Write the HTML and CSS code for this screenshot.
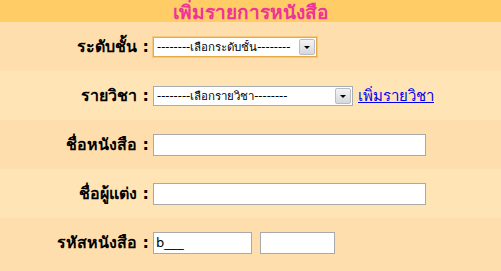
FILE: index.html
```html
<!DOCTYPE html>
<html lang="th">
<head>
  <meta charset="UTF-8" />
  <title>เพิ่มรายการหนังสือ</title>
  <link rel="stylesheet" href="styles.css">
</head>
<body>
  <div class="form-box">
    <div class="form-head">เพิ่มรายการหนังสือ</div>

    <div class="form-row odd">
      <span class="form-label">ระดับชั้น :</span>
      <span class="pick-wrap focus">
        <select class="pick pick-level">
          <option>--------เลือกระดับชั้น--------</option>
        </select>
        <span class="pick-btn"></span>
      </span>
    </div>

    <div class="form-row even">
      <span class="form-label">รายวิชา :</span>
      <span class="pick-wrap">
        <select class="pick pick-subject">
          <option>--------เลือกรายวิชา--------</option>
        </select>
        <span class="pick-btn"></span>
      </span>
      <a href="#" class="add-link">เพิ่มรายวิชา</a>
    </div>

    <div class="form-row odd">
      <span class="form-label">ชื่อหนังสือ :</span>
      <input class="field field-long" type="text" />
    </div>

    <div class="form-row even">
      <span class="form-label">ชื่อผู้แต่ง :</span>
      <input class="field field-long" type="text" />
    </div>

    <div class="form-row odd">
      <span class="form-label">รหัสหนังสือ :</span>
      <input class="field field-code" type="text" value="b___" />
      <input class="field field-num" type="text" />
    </div>
  </div>
</body>
</html>
```

FILE: styles.css
```css
body {
  margin: 0;
  padding: 0;
  font-family: Tahoma, "DejaVu Sans", sans-serif;
  background: #ffdead;
}

.form-box {
  width: 501px;
}

.form-head {
  height: 22px;
  line-height: 24px;
  background: #ffcc66;
  color: #ee3399;
  font-size: 19px;
  font-weight: bold;
  text-align: center;
}

.form-row {
  display: flex;
  align-items: center;
  height: 49px;
}

.form-row.odd {
  background: #ffdead;
}

.form-row.even {
  background: #ffe4b5;
}

.form-label {
  width: 149px;
  text-align: right;
  font-size: 16px;
  font-weight: bold;
  color: #000;
  margin-right: 4px;
}

/* xp style dropdown */
.pick-wrap {
  position: relative;
  display: inline-block;
  height: 18px;
  border: 1px solid #a5acb2;
  background: #fff;
}

.pick-wrap.focus {
  border-color: #e5a94a;
  box-shadow: 0 0 0 1px #f5c87a;
}

.pick {
  -webkit-appearance: none;
  appearance: none;
  display: block;
  height: 18px;
  font-family: Tahoma, "DejaVu Sans", sans-serif;
  font-size: 11.5px;
  border: none;
  background: transparent;
  padding: 0 0 0 3px;
  color: #000;
  outline: none;
}

.pick-level {
  width: 162px;
}

.pick-subject {
  width: 198px;
}

.pick-btn {
  position: absolute;
  top: 1px;
  right: 1px;
  width: 14px;
  height: 14px;
  border: 1px solid #b8bcc4;
  border-radius: 2px;
  background: linear-gradient(#f4f4f4, #d6d8dc);
}

.pick-btn::after {
  content: "";
  position: absolute;
  left: 4px;
  top: 6px;
  border-left: 3px solid transparent;
  border-right: 3px solid transparent;
  border-top: 3px solid #000;
}

.add-link {
  margin-left: 5px;
  font-size: 15px;
  color: #0000ee;
}

.field {
  box-sizing: border-box;
  height: 22px;
  border: 1px solid #a9a9a9;
  background: #fff;
  font-family: Tahoma, "DejaVu Sans", sans-serif;
  font-size: 13px;
  padding: 0 2px;
}

.field-long {
  width: 273px;
}

.field-code {
  width: 99px;
  margin-right: 8px;
}

.field-num {
  width: 75px;
}
```
